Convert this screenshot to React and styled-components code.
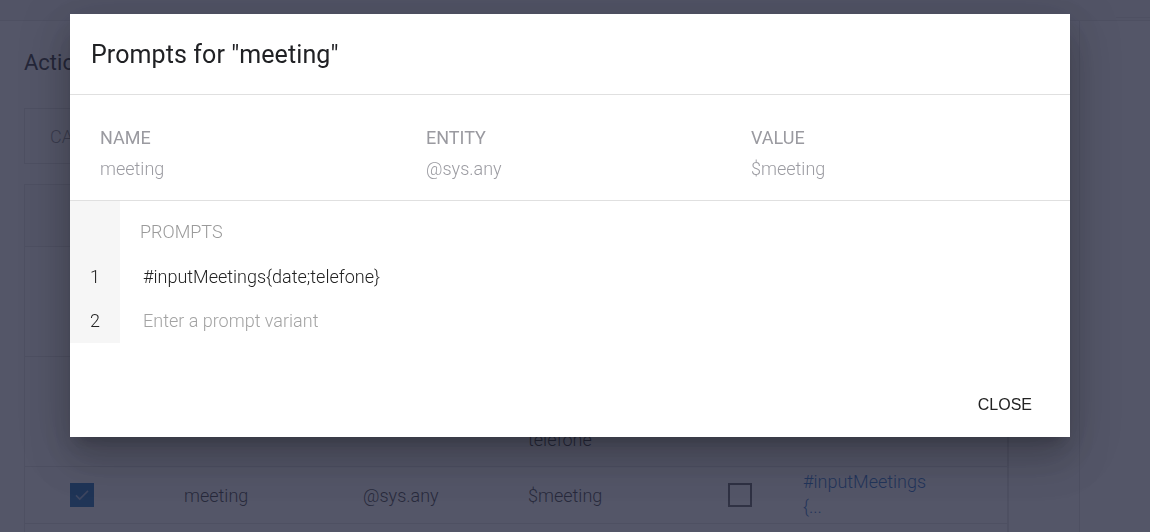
import React from "react";
import styled, { createGlobalStyle } from "styled-components";

const Global = createGlobalStyle`
  html, body { margin: 0; padding: 0; }
  body {
    background: #fff;
    font-family: Roboto, "Noto Sans", Arial, sans-serif;
    width: 1150px;
    height: 532px;
    overflow: hidden;
  }
`;

const Page = styled.div`
  width: 1150px;
  height: 532px;
  overflow: hidden;
  display: flex;
  flex-direction: column;
  background: #fff;
`;

const TopBar = styled.div`
  height: 20px;
  flex: none;
  border-bottom: 1px solid #e4e4e4;
  background: #f6f6f6;
`;

const Main = styled.div`
  flex: 1;
  display: flex;
`;

const Content = styled.div`
  width: 984px;
  padding-left: 24px;
  display: flex;
  flex-direction: column;
`;

const Heading = styled.h2`
  margin: 27px 0 0;
  height: 30px;
  font-size: 22px;
  font-weight: 400;
  color: #222;
  line-height: 30px;
`;

const InputBox = styled.div`
  margin-top: 30px;
  height: 54px;
  border: 1px solid #e0e0e0;
  display: flex;
  align-items: center;
  padding-left: 25px;
  font-size: 18px;
  font-weight: 300;
  color: #888;
`;

const Table = styled.div`
  margin-top: 20px;
  border: 1px solid #e0e0e0;
  border-bottom: none;
`;

const Row = styled.div`
  height: ${(p) => p.$h}px;
  border-bottom: 1px solid #e0e0e0;
  display: grid;
  grid-template-columns: 159px 179px 165px 200px 75px 1fr;
  align-items: center;
  font-size: 18px;
  font-weight: 300;
  color: #333;
  background: ${(p) => (p.$head ? "#fafafa" : "#fff")};
`;

const Cell = styled.div`
  position: relative;
  ${(p) => p.$check && "padding-left: 45px;"}
`;

const CellStack = styled.div`
  display: flex;
  flex-direction: column;
  justify-content: flex-end;
  align-self: stretch;
  padding-bottom: 16px;
`;

const Check = styled.div`
  width: 24px;
  height: 24px;
  box-sizing: border-box;
  border: ${(p) => (p.$on ? "none" : "2px solid #555")};
  background: ${(p) => (p.$on ? "#0b62b0" : "transparent")};
  display: flex;
  align-items: center;
  justify-content: center;
`;

const Link = styled.div`
  color: #1565c0;
  line-height: 25px;
  margin-top: -2px;
`;

const Side = styled.div`
  flex: 1;
  display: flex;
`;

const SideGap = styled.div`
  width: 70px;
  border-left: 1px solid #e0e0e0;
`;

const SidePanel = styled.div`
  flex: 1;
  border-left: 1px solid #e4e4e4;
  padding: 0 0 0 36px;
`;

const SideRule = styled.div`
  margin-top: -4px;
  border-top: 1px solid #e2e2e2;
`;

const Backdrop = styled.div`
  position: fixed;
  inset: 0;
  background: rgba(38, 40, 64, 0.79);
  display: flex;
  align-items: flex-start;
  padding: 14px 0 0 70px;
`;

const Dialog = styled.div`
  width: 1000px;
  height: 423px;
  background: #fff;
  display: flex;
  flex-direction: column;
  box-shadow: 0 11px 15px -7px rgba(0, 0, 0, 0.2),
    0 24px 38px 3px rgba(0, 0, 0, 0.14), 0 9px 46px 8px rgba(0, 0, 0, 0.12);
`;

const DialogHeader = styled.div`
  height: 81px;
  flex: none;
  box-sizing: border-box;
  border-bottom: 1px solid #e0e0e0;
  display: flex;
  align-items: center;
  padding-left: 21px;
`;

const Title = styled.h1`
  margin: 0;
  font-family: Roboto, sans-serif;
  font-size: 25px;
  font-weight: 400;
  color: #202124;
  letter-spacing: 0.1px;
`;

const InfoGrid = styled.div`
  height: 106px;
  flex: none;
  box-sizing: border-box;
  border-bottom: 1px solid #e0e0e0;
  display: grid;
  grid-template-columns: 326px 325px 1fr;
  padding: 32px 0 0 30px;
`;

const InfoCol = styled.div`
  display: flex;
  flex-direction: column;
  gap: 10px;
`;

const InfoLabel = styled.div`
  font-size: 18px;
  font-weight: 400;
  color: #9a9aa0;
  line-height: 21px;
`;

const InfoValue = styled.div`
  font-size: 18px;
  font-weight: 300;
  color: #9c9ca2;
  line-height: 21px;
`;

const PromptArea = styled.div`
  display: grid;
  grid-template-columns: 50px 1fr;
  height: 141px;
  flex: none;
`;

const Gutter = styled.div`
  background: #f6f6f6;
  display: flex;
  flex-direction: column;
  padding-top: 54px;
`;

const Num = styled.div`
  height: 44px;
  line-height: 44px;
  text-align: center;
  font-size: 18px;
  font-weight: 300;
  color: #222;
`;

const PromptList = styled.div`
  display: flex;
  flex-direction: column;
  padding-left: 20px;
  padding-top: 20px;
`;

const PromptsLabel = styled.div`
  font-size: 18px;
  font-weight: 300;
  color: #9a9a9a;
  line-height: 21px;
  height: 34px;
`;

const PromptText = styled.div`
  height: 44px;
  line-height: 44px;
  padding-left: 3px;
  font-size: 18px;
  font-weight: 300;
  color: ${(p) => (p.$placeholder ? "#a3a3a3" : "#222")};
`;

const Footer = styled.div`
  flex: 1;
  display: flex;
  justify-content: flex-end;
  align-items: flex-start;
  padding: 53px 38px 0 0;
`;

const CloseButton = styled.button`
  border: none;
  background: transparent;
  padding: 0;
  font-family: "Liberation Sans", Arial, sans-serif;
  font-size: 16px;
  color: #222;
  line-height: 20px;
  cursor: pointer;
`;

const CheckMark = () => (
  <svg width="18" height="18" viewBox="0 0 24 24" fill="none" stroke="#9bb8d8" strokeWidth="2">
    <path d="M4 12.5l5 5L20 6.5" />
  </svg>
);

export default function App() {
  return (
    <>
      <Global />
      <Page>
        <TopBar />
        <Main>
          <Content>
            <Heading>Actions and parameters</Heading>
            <InputBox>CANCEL</InputBox>
            <Table>
              <Row $h={61} $head>
                <Cell />
                <Cell>PARAMETER NAME</Cell>
                <Cell>ENTITY</Cell>
                <Cell>VALUE</Cell>
                <Cell>IS LIST</Cell>
                <Cell>PROMPTS</Cell>
              </Row>
              <Row $h={109}>
                <Cell $check><Check $on><CheckMark /></Check></Cell>
                <Cell>date</Cell>
                <Cell>@sys.date</Cell>
                <Cell>$date</Cell>
                <Cell><Check /></Cell>
                <Cell />
              </Row>
              <Row $h={109}>
                <Cell $check><Check $on><CheckMark /></Check></Cell>
                <Cell>telefone</Cell>
                <Cell>@sys.phone-number</Cell>
                <CellStack>$telefone<br />telefone</CellStack>
                <Cell><Check /></Cell>
                <Cell />
              </Row>
              <Row $h={56}>
                <Cell $check><Check $on><CheckMark /></Check></Cell>
                <Cell>meeting</Cell>
                <Cell>@sys.any</Cell>
                <Cell>$meeting</Cell>
                <Cell><Check /></Cell>
                <Cell>
                  <Link>#inputMeetings<br />{"{..."}</Link>
                </Cell>
              </Row>
              <Row $h={40}>
                <Cell />
              </Row>
            </Table>
          </Content>
          <Side>
            <SideGap />
            <SidePanel>
              <SideRule />
            </SidePanel>
          </Side>
        </Main>
      </Page>
      <Backdrop>
        <Dialog role="dialog">
          <DialogHeader>
            <Title>Prompts for "meeting"</Title>
          </DialogHeader>
          <InfoGrid>
            <InfoCol>
              <InfoLabel>NAME</InfoLabel>
              <InfoValue>meeting</InfoValue>
            </InfoCol>
            <InfoCol>
              <InfoLabel>ENTITY</InfoLabel>
              <InfoValue>@sys.any</InfoValue>
            </InfoCol>
            <InfoCol>
              <InfoLabel>VALUE</InfoLabel>
              <InfoValue>$meeting</InfoValue>
            </InfoCol>
          </InfoGrid>
          <PromptArea>
            <Gutter>
              <Num>1</Num>
              <Num>2</Num>
            </Gutter>
            <PromptList>
              <PromptsLabel>PROMPTS</PromptsLabel>
              <PromptText>#inputMeetings{"{date;telefone}"}</PromptText>
              <PromptText $placeholder>Enter a prompt variant</PromptText>
            </PromptList>
          </PromptArea>
          <Footer>
            <CloseButton>CLOSE</CloseButton>
          </Footer>
        </Dialog>
      </Backdrop>
    </>
  );
}
